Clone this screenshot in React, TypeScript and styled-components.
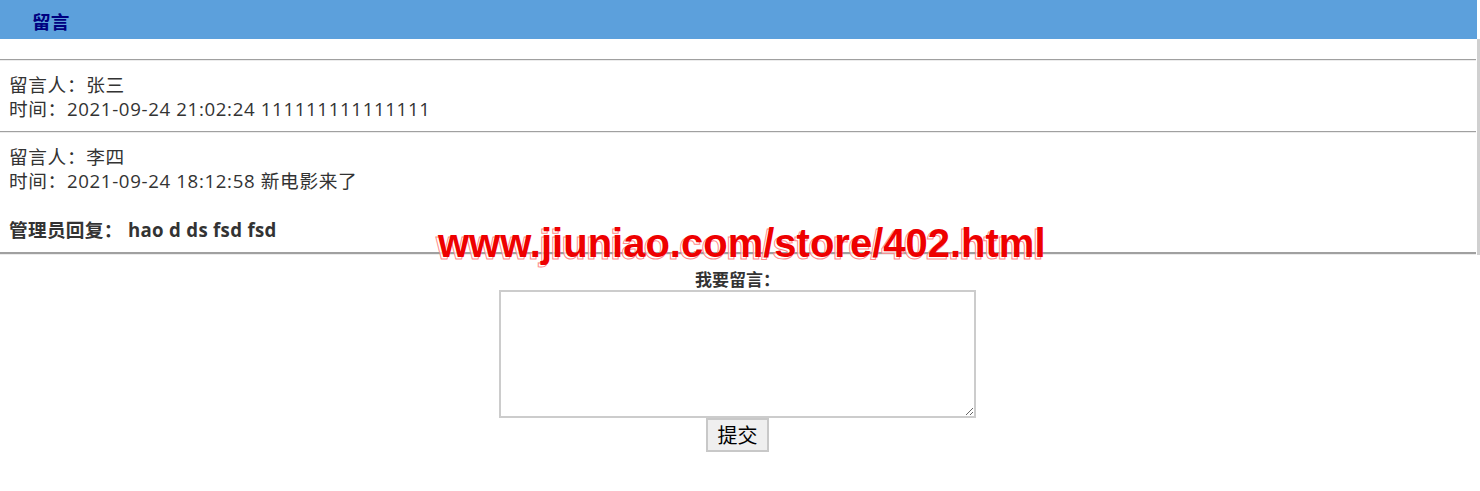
import React from "react";
import styled, { createGlobalStyle } from "styled-components";

const Global = createGlobalStyle`
  html, body { margin: 0; padding: 0; background: #fff; }
  body {
    font-family: "Open Sans", "Noto Sans CJK SC", sans-serif;
    color: #333;
  }
`;

const Page = styled.div`
  position: relative;
  width: 1480px;
`;

const Header = styled.div`
  box-sizing: border-box;
  width: 1477px;
  height: 39px;
  background: #5ca0dc;
  display: flex;
  align-items: center;
  padding-left: 32px;
`;

const HeaderTitle = styled.h2`
  margin: 0;
  font-family: "Noto Sans CJK SC", sans-serif;
  font-size: 18.67px;
  font-weight: 700;
  color: #000080;
  line-height: 1;
  padding-top: 4px;
`;

const Board = styled.div`
  width: 1477px;
  border-right: 3px solid #d0d0d0;
  padding-top: 20px;
`;

const Divider = styled.div<{ $thick?: boolean }>`
  height: 0;
  border-top: ${(p) => (p.$thick ? 2 : 1)}px solid #a0a0a0;
  border-bottom: 1px solid #ececec;
  margin-right: 1px;
`;

const Message = styled.div`
  padding: 12px 10px 10px 9px;
  font-size: 18.67px;
  line-height: 24px;
  letter-spacing: 0.65px;
`;

const Line = styled.div``;

const Reply = styled.div`
  margin-top: 25px;
  font-weight: 700;
  letter-spacing: 0.3px;
`;

const Form = styled.form`
  width: 1475px;
  display: flex;
  flex-direction: column;
  align-items: center;
  padding-top: 13px;
`;

const Label = styled.div`
  font-family: "Noto Sans CJK SC", sans-serif;
  font-size: 17px;
  font-weight: 700;
  line-height: 22px;
  color: #333;
`;

const TextArea = styled.textarea`
  box-sizing: border-box;
  width: 477px;
  height: 128px;
  border: 2px solid #cccccc;
  padding: 2px;
  margin: 0;
  display: block;
  outline: none;
`;

const SubmitButton = styled.button`
  box-sizing: border-box;
  width: 63px;
  height: 34px;
  margin: 0;
  padding: 0;
  border: 2px solid #c8c8c8;
  background: #efefef;
  color: #000;
  font-family: "Noto Sans CJK SC", sans-serif;
  font-size: 20px;
  line-height: 1;
`;

const Watermark = styled.div`
  position: absolute;
  left: 438px;
  top: 223px;
  z-index: 1;
  isolation: isolate;
  font-family: "Liberation Sans", Arial, sans-serif;
  font-weight: 700;
  font-size: 40px;
  line-height: 40px;
  white-space: nowrap;
  color: #ee0000;
  pointer-events: none;

  &::before {
    content: attr(data-text);
    position: absolute;
    left: -2px;
    top: 2px;
    color: rgba(255, 255, 255, 0.7);
    -webkit-text-stroke: 1px #ff8c8c;
    z-index: -1;
  }
`;

const messages = [
  { who: "张三", time: "2021-09-24 21:02:24", text: "111111111111111", reply: "" },
  { who: "李四", time: "2021-09-24 18:12:58", text: "新电影来了", reply: "hao d ds fsd fsd" },
];

export default function App() {
  const wm = "www.jiuniao.com/store/402.html";
  return (
    <Page>
      <Global />
      <Header>
        <HeaderTitle>留言</HeaderTitle>
      </Header>
      <Board>
        {messages.map((m, i) => (
          <React.Fragment key={i}>
            <Divider />
            <Message>
              <Line>留言人：{m.who}</Line>
              <Line>
                时间：{m.time} {m.text}
              </Line>
              {m.reply && <Reply>管理员回复： {m.reply}</Reply>}
            </Message>
          </React.Fragment>
        ))}
        <Divider $thick />
      </Board>
      <Form onSubmit={(e) => e.preventDefault()}>
        <Label>我要留言：</Label>
        <TextArea />
        <SubmitButton type="submit">提交</SubmitButton>
      </Form>
      <Watermark data-text={wm}>{wm}</Watermark>
    </Page>
  );
}
